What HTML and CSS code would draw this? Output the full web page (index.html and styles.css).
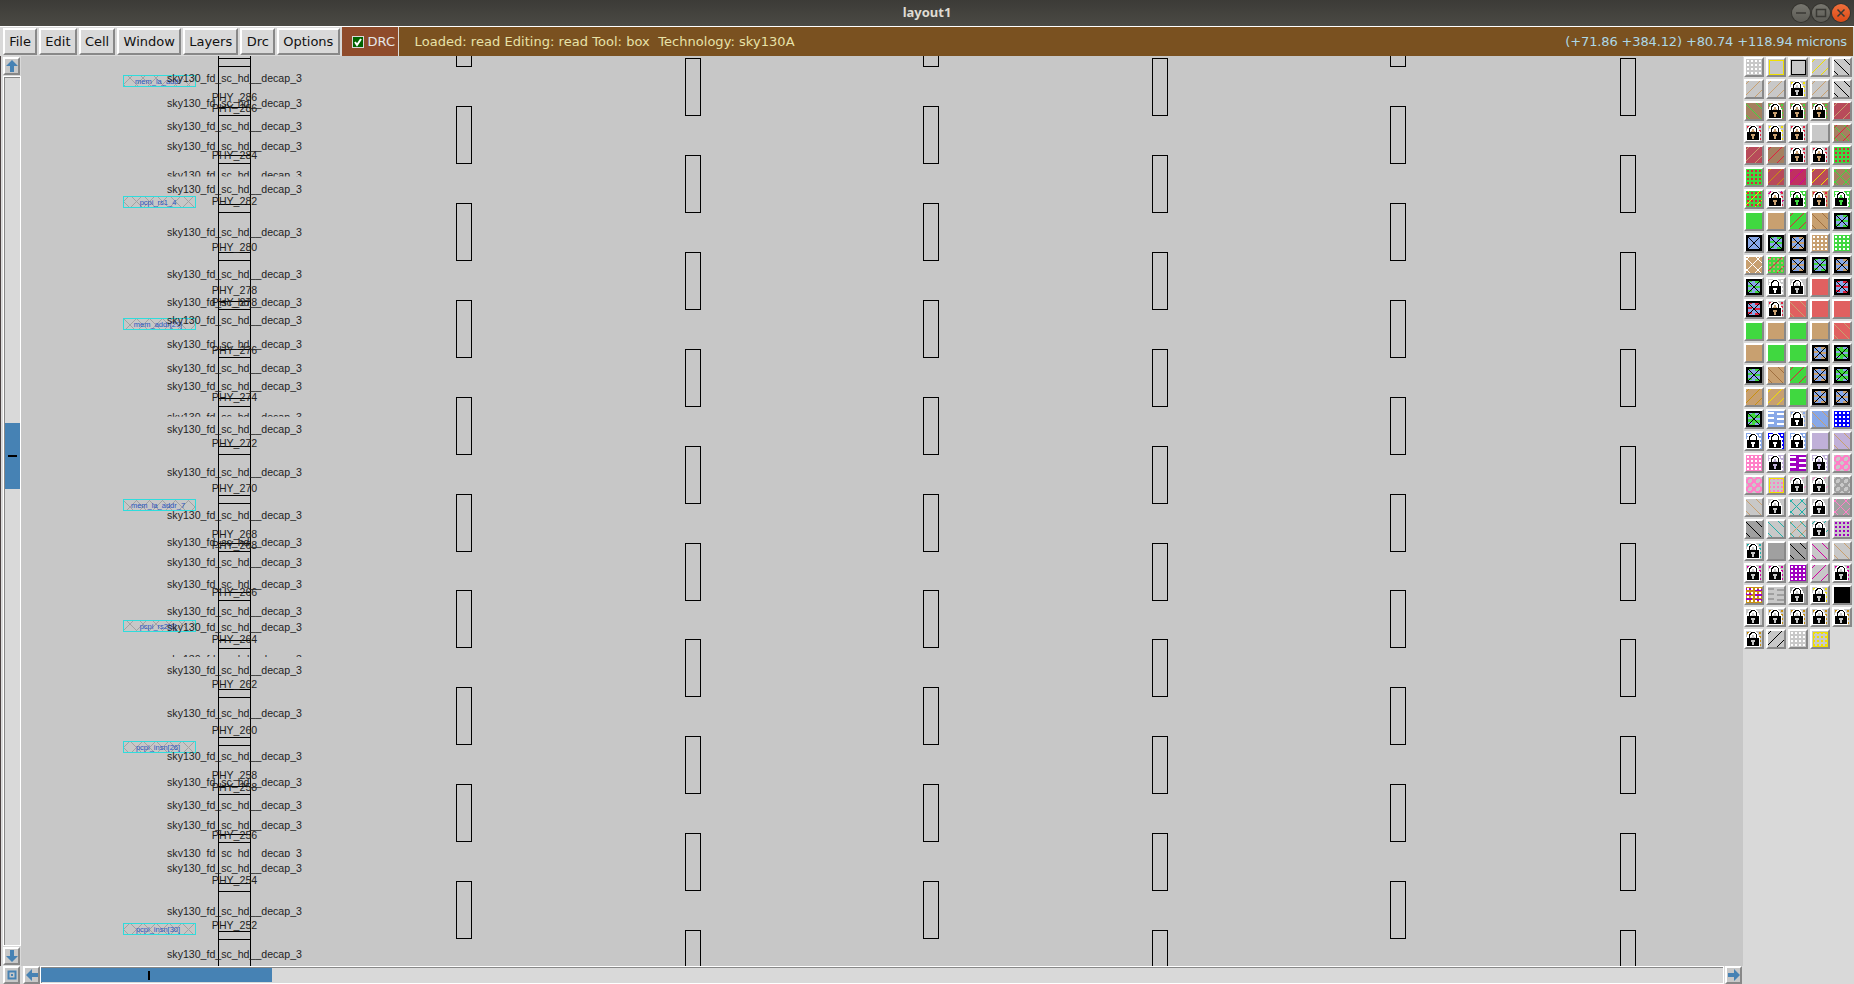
FILE: index.html
```html
<!DOCTYPE html>
<html>
	<head>
		<title>layout1</title>
		<link rel="stylesheet" href="styles.css">
	</head>
	<body>
		<div class="titlebar">
			<div></div>
			<div class="title">layout1</div>
			<div class="win-buttons">
				<span class="win-btn"><svg width="18" height="18"><path d="M4 9h10" class="win-glyph"/></svg></span>
				<span class="win-btn"><svg width="18" height="18"><path d="M4.5 5.5h9v7h-9z" class="win-glyph"/></svg></span>
				<span class="win-btn win-close"><svg width="18" height="18"><path d="M5.5 5.5l7 7M12.5 5.5l-7 7" class="win-glyph"/></svg></span>
			</div>
		</div>

		<div class="toolbar">
			<div class="menu-btn">File</div>
			<div class="menu-btn">Edit</div>
			<div class="menu-btn">Cell</div>
			<div class="menu-btn">Window</div>
			<div class="menu-btn">Layers</div>
			<div class="menu-btn">Drc</div>
			<div class="menu-btn">Options</div>
			<div class="drc-toggle">
				<svg class="drc-check" width="12" height="12"><rect x="0.5" y="0.5" width="11" height="11" class="drc-box"/><path d="M3 6l2 3 4-6" class="drc-tick"/></svg>
				<span>DRC</span>
			</div>
			<div class="status">
				<span class="status-left">Loaded: read Editing: read Tool: box  Technology: sky130A</span>
				<span class="status-right">(+71.86 +384.12) +80.74 +118.94 microns</span>
			</div>
		</div>

		<div class="main">
			<div class="vscroll">
				<div class="arrow-btn"><svg width="14" height="14"><path d="M7 1l6 6H9v6H5V7H1z" class="arrow"/></svg></div>
				<div class="vtrough">
					<div class="vthumb"><span class="vtick"></span></div>
				</div>
				<div class="arrow-btn"><svg width="14" height="14"><path d="M7 13l6-6H9V1H5v6H1z" class="arrow"/></svg></div>
			</div>

			<svg id="layout" class="layout" viewBox="21 56 1722 910">
				<defs>
					<pattern id="hatch" width="13" height="13" patternUnits="userSpaceOnUse">
						<path d="M0 0l13 13M13 0L0 13" class="hatch-line"/>
					</pattern>
				</defs>
			</svg>

			<div id="palette" class="palette"></div>
		</div>

		<div class="bottom">
			<div class="arrow-btn"><svg width="14" height="14"><path d="M3.5 3.5h7v7h-7z" class="zoom-box"/><path d="M6 6h2v2H6z" class="arrow"/></svg></div>
			<div class="arrow-btn"><svg width="14" height="14"><path d="M1 7l6-6v4h6v4H7v4z" class="arrow"/></svg></div>
			<div class="htrough">
				<div class="hthumb"><span class="htick"></span></div>
			</div>
			<div class="arrow-btn arrow-right"><svg width="14" height="14"><path d="M13 7L7 1v4H1v4h6v4z" class="arrow"/></svg></div>
			<div class="bottom-rest"></div>
		</div>

		<script src="app.js"></script>
	</body>
</html>
```

FILE: styles.css
```css
* {
	box-sizing: border-box;
}

html,
body {
	margin: 0;
	height: 100%;
}

body {
	width: 1854px;
	height: 984px;
	overflow: hidden;
	display: flex;
	flex-direction: column;
	background: #d9d9d9;
	font-family: "DejaVu Sans", sans-serif;
	font-size: 13px;
}

.titlebar {
	height: 26px;
	display: grid;
	grid-template-columns: 1fr auto 1fr;
	align-items: center;
	background: linear-gradient(#3c3b37, #4b4a44);
}

.title {
	padding-bottom: 2px;
	font-family: "Noto Sans", sans-serif;
	font-size: 13px;
	font-weight: 700;
	color: #dfdbd2;
}

.win-buttons {
	display: flex;
	justify-content: flex-end;
	gap: 2px;
	padding-right: 4px;
}

.win-btn {
	width: 18px;
	height: 18px;
	border-radius: 50%;
	background: linear-gradient(#77766f, #5c5b55);
	box-shadow: 0 0 0 1px #35342f;
}

.win-btn svg {
	display: block;
}

.win-close {
	background: linear-gradient(#f0703c, #dc4a16);
}

.win-glyph {
	fill: none;
	stroke: #3a3934;
	stroke-width: 1.5;
}

.toolbar {
	height: 30px;
	flex: none;
	display: flex;
	align-items: stretch;
	border-top: 1px solid #fff;
	padding-left: 3px;
	background: #d9d9d9;
}

.menu-btn {
	margin: 1px 2px 1px 0;
	padding: 0 4.2px;
	display: flex;
	align-items: center;
	border: 2px solid;
	border-color: #fff #888 #888 #fff;
	background: #d9d9d9;
	color: #111;
}

.drc-toggle {
	width: 57px;
	display: flex;
	align-items: center;
	gap: 4px;
	padding-left: 10px;
	background: #8f4b2b;
	color: #e6e6e6;
	border-right: 1px solid #d9d9d9;
}

.drc-check {
	flex: none;
}

.drc-box {
	fill: #006400;
	stroke: #d9d9d9;
}

.drc-tick {
	fill: none;
	stroke: #fff;
	stroke-width: 2;
}

.status {
	flex: 1;
	display: flex;
	justify-content: space-between;
	align-items: center;
	padding: 0 6px 0 16px;
	margin-right: 1px;
	background: #7a5120;
	white-space: pre;
}

.status-left {
	color: #e8e2a8;
	letter-spacing: 0.04px;
}

.status-right {
	color: #add8e6;
	letter-spacing: -0.14px;
}

.main {
	flex: 1;
	min-height: 0;
	display: flex;
	border-left: 1px solid #4a4040;
}

.vscroll {
	width: 20px;
	flex: none;
	display: flex;
	flex-direction: column;
	gap: 1px;
	padding: 1px 0 1px 2px;
}

.arrow-btn {
	width: 17px;
	height: 18px;
	flex: none;
	display: flex;
	align-items: center;
	justify-content: center;
	border: 2px solid;
	border-color: #fff #888 #888 #fff;
	background: #c8c8c8;
}

.arrow {
	fill: #4682b4;
}

.zoom-box {
	fill: none;
	stroke: #4682b4;
	stroke-width: 2;
}

.vtrough {
	flex: 1;
	padding-top: 346px;
	border: 1px solid #fff;
	box-shadow: inset 1px 1px 0 #888;
	background: #d9d9d9;
}

.vthumb {
	height: 66px;
	margin-left: 1px;
	display: flex;
	align-items: center;
	justify-content: center;
	background: #4682b4;
}

.vtick {
	width: 9px;
	height: 2px;
	background: #000;
}

.layout {
	width: 1722px;
	flex: none;
	display: block;
	background: #c7c7c7;
}

.rect {
	fill: none;
	stroke: #000;
	shape-rendering: crispEdges;
}

.cell-line {
	stroke: #000;
	shape-rendering: crispEdges;
}

.cell-label {
	font-family: "Liberation Sans", sans-serif;
	font-size: 10.6px;
	fill: #1e1e1e;
	text-anchor: middle;
}

.hatch-line {
	fill: none;
	stroke: #a2a2a2;
}

.pin-box {
	fill: url(#hatch);
	stroke: #2fdcdc;
	shape-rendering: crispEdges;
}

.pin-label {
	font-family: "Liberation Sans", sans-serif;
	font-size: 7.5px;
	fill: #2a55c0;
	text-anchor: middle;
}

.palette {
	flex: 1;
	display: grid;
	grid-template-columns: repeat(5, 20px);
	grid-auto-rows: 20px;
	gap: 2px;
	align-content: start;
	padding: 1px 0 0 1px;
}

.swatch {
	border: 2px solid;
	border-color: #fff #888 #888 #fff;
}

.swatch svg {
	display: block;
	shape-rendering: crispEdges;
}

.bottom {
	height: 18px;
	flex: none;
	display: flex;
	padding-left: 3px;
	gap: 3px;
}

.htrough {
	width: 1684px;
	margin-left: -3px;
	padding: 1px 0 0 0;
	border: 1px solid #fff;
	box-shadow: inset 1px 1px 0 #888;
	background: #d9d9d9;
}

.hthumb {
	width: 231px;
	height: 14px;
	display: flex;
	align-items: center;
	padding-left: 107px;
	background: #4682b4;
}

.htick {
	width: 2px;
	height: 9px;
	background: #000;
}

.arrow-right {
	margin-left: -2px;
}

.bottom-rest {
	flex: 1;
}
```

FILE: app.js
```js
// layout canvas, page coordinates thanks to the svg viewBox
var NS = "http://www.w3.org/2000/svg";
var layout = document.getElementById("layout");

function add(tag, attrs, text) {
	var el = document.createElementNS(NS, tag);
	for (var k in attrs) el.setAttribute(k, attrs[k]);
	if (text) el.textContent = text;
	layout.appendChild(el);
	return el;
}

// the tall empty boxes, two staggered sets
[[456, 9], [685, 58], [923, 9], [1152, 58], [1390, 9], [1620, 58]].forEach(function (col) {
	for (var y = col[1]; y < 970; y += 96.9) {
		add("rect", { class: "rect", x: col[0] + 0.5, y: Math.round(y) + 0.5, width: 15, height: 57 });
	}
});

// cell column
[218, 250].forEach(function (x) {
	add("line", { class: "cell-line", x1: x + 0.5, x2: x + 0.5, y1: 56, y2: 966 });
});
for (var k = 0; k < 19; k++) {
	[58, 66].forEach(function (y0) {
		var y = Math.round(y0 + 48.5 * k) + 0.5;
		add("line", { class: "cell-line", x1: 218, x2: 251, y1: y, y2: y });
	});
}

// pin boxes
[
	[75, "mem_la_addr"],
	[196, "pcpi_rs1_4"],
	[318, "mem_addr[29]"],
	[499, "mem_la_addr_7"],
	[620, "pcpi_rs2[8]"],
	[741, "pcpi_insn[26]"],
	[923, "pcpi_insn[30]"]
].forEach(function (pin) {
	add("rect", { class: "pin-box", x: 123.5, y: pin[0] + 0.5, width: 72, height: 11 });
	add("text", { class: "pin-label", x: 158, y: pin[0] + 9 }, pin[1]);
});

// labels, [center y, clip bottom]
var decap = [78, 103, 126, 146, [175, 176.5], 189, 232, 274, 302, 320, 344, 368, 386, [417, 416.7],
	429, 472, 515, 542, 562, 584, 611, 627, [659, 657], 670, 713, 756, 782, 805, 825,
	[853, 857], 868, 911, 954];
var phy = [[97, "286"], [108, "286"], [155, "284"], [201, "282"], [247, "280"], [290, "278"],
	[302, "278"], [[341, 336.7], "276"], [350, "276"], [397, "274"], [443, "272"], [488, "270"],
	[534, "268"], [545, "268"], [592, "266"], [639, "264"], [684, "262"], [730, "260"],
	[775, "258"], [787, "258"], [835, "256"], [880, "254"], [925, "252"]];

function label(pos, text, id) {
	var y = pos[0] || pos;
	var attrs = { class: "cell-label", x: 234.5, y: y + 4 };
	if (pos[1]) {
		var clip = add("clipPath", { id: "cut" + id });
		var r = document.createElementNS(NS, "rect");
		r.setAttribute("x", 100);
		r.setAttribute("y", y - 20);
		r.setAttribute("width", 300);
		r.setAttribute("height", pos[1] - y + 20);
		clip.appendChild(r);
		attrs["clip-path"] = "url(#cut" + id + ")";
	}
	add("text", attrs, text);
}

decap.forEach(function (pos, i) {
	label(pos, "sky130_fd_sc_hd__decap_3", "d" + i);
});
phy.forEach(function (row, i) {
	label(row[0], "PHY_" + row[1], "p" + i);
});

// layer palette
var COLORS = {
	g: "#c8c8c8", t: "#c8a070", b: "#a58060", r: "#b84a5a", c: "#c03060",
	G: "#40d840", B: "#88a8e8", R: "#e06060", l: "#c0b0d8", p: "#ff80c8",
	a: "#a0a0a0", K: "#000", w: "#fff", y: "#f0e000", o: "#c89010", m: "#d000a0",
	u: "#a000c0", T: "#20b0a8", n: "#c8a070", d: "#a07040", e: "#e02040", D: "#0000ff"
};

var SWATCHES = [
	"g .w", "g Sy", "g SK", "g /y", "g \\K",
	"g /n", "g /n", "g .y Lg", "g /n", "g \\K",
	"b \\G", "b .G Ln", "b .G Ln", "b .G Ln", "r /n",
	"g .e Ln", "g .e .y Ln", "g .e Ln", "g", "b \\G /e",
	"r /n", "b /e", "g .e Ln", "g .e Ln", "G .e",
	"G .e", "r /o", "c /m", "r /y", "b /G \\G",
	"G /y .e", "g .e /m Ln", "G .w LG", "t .e Ln", "G .w LG",
	"G", "t", "G /e", "t \\d", "B =G X",
	"B X", "B =G X", "B =n X", "t .w", "G .w",
	"t #w", "G /e .n", "B =n X", "B =G X", "B =n X",
	"B =G X", "g .w Lw", "g Lg", "R", "B =e X",
	"B =e X", "g .e Ln", "R \\n", "R", "R",
	"G", "t", "G", "t", "R \\n",
	"t", "G", "G", "B =n X", "G =B X",
	"B =G X", "t \\d", "G /e", "B =n X", "G =B X",
	"t /o", "t /y", "G", "B =n X", "B =n X",
	"G =B X", "B =w", "g .B Lw", "B \\n", "D .w",
	"B .w Lw", "D .w Lw", "B .w Lw", "l", "l \\n",
	"p .w", "l .w Ll", "u =w", "l .w Ll", "g Op",
	"g Op", "g .p Sy", "g /p Lg", "g /p Lg", "g Oa",
	"g \\n", "g Lg", "g #K #T", "g Lg", "a #p",
	"a \\K", "g \\T", "g \\T /n", "g /T Lg", "g .u",
	"g .T Lg", "a", "a \\K", "g \\m", "g \\m \\n",
	"g .m Lg", "g .m Lg", "u .w", "g /m", "g .m Lg",
	"o =u .w", "g =a", "a Lg", "g .y Lg", "K",
	"g Lg", "g .o Lg", "g .o Lg", "g .o Lg", "g .o Lg",
	"g .o Lg", "g /K", "g .w", "g .y Sy"
];

function lock(color) {
	return '<path d="M0 16V7l3-6 3-1h2l3 1 3 6v9z" fill="#fff"/>' +
		'<path d="M1 15V7h2V4l2-3h4l2 3v3h2v8z" fill="#000"/>' +
		'<path d="M4 7V4l2-2h2l2 2v3z" fill="#fff"/>' +
		'<path d="M7 3l2 4H5z" fill="' + color + '"/>' +
		'<path d="M5 9h4v2H8v3H6v-3H5z" fill="' + color + '"/>';
}

function drawOp(op) {
	var kind = op[0], color = COLORS[op[1]], out = "", i, j;
	if (kind === "/" || kind === "#") {
		for (i = 3; i < 32; i += 11) out += '<path d="M' + i + ' 0L0 ' + i + '" stroke="' + color + '"/>';
	}
	if (kind === "\\" || kind === "#") {
		for (i = -12; i < 16; i += 11) out += '<path d="M' + i + ' 0l16 16" stroke="' + color + '"/>';
	}
	if (kind === ".") {
		for (i = 1; i < 16; i += 4) {
			for (j = 1; j < 16; j += 4) out += '<rect x="' + i + '" y="' + j + '" width="2" height="2" fill="' + color + '"/>';
		}
	}
	if (kind === "=") {
		for (j = 2; j < 16; j += 5) {
			out += '<path d="M0 ' + j + 'h6M9 ' + (j + 1) + 'h7" stroke="' + color + '" stroke-width="2"/>';
		}
	}
	if (kind === "O") {
		[4, 12].forEach(function (x) {
			[4, 12].forEach(function (y) {
				out += '<circle cx="' + x + '" cy="' + y + '" r="3" fill="none" stroke-width="2" stroke="' + color + '"/>';
			});
		});
	}
	if (kind === "S") out += '<rect x="1" y="1" width="14" height="14" fill="none" stroke-width="1" stroke="' + color + '"/>';
	if (kind === "X") out += '<path d="M1 1h14v14H1zM1 1l14 14M15 1L1 15" fill="none" stroke="#000" stroke-width="1.4"/>';
	if (kind === "L") out += lock(color);
	return out;
}

var palette = document.getElementById("palette");
palette.innerHTML = SWATCHES.map(function (desc) {
	var parts = desc.split(" ");
	var bg = COLORS[parts[0]];
	return '<div class="swatch"><svg width="16" height="16"><rect width="16" height="16" fill="' + bg + '"/>' +
		parts.slice(1).map(drawOp).join("") + "</svg></div>";
}).join("");
```
